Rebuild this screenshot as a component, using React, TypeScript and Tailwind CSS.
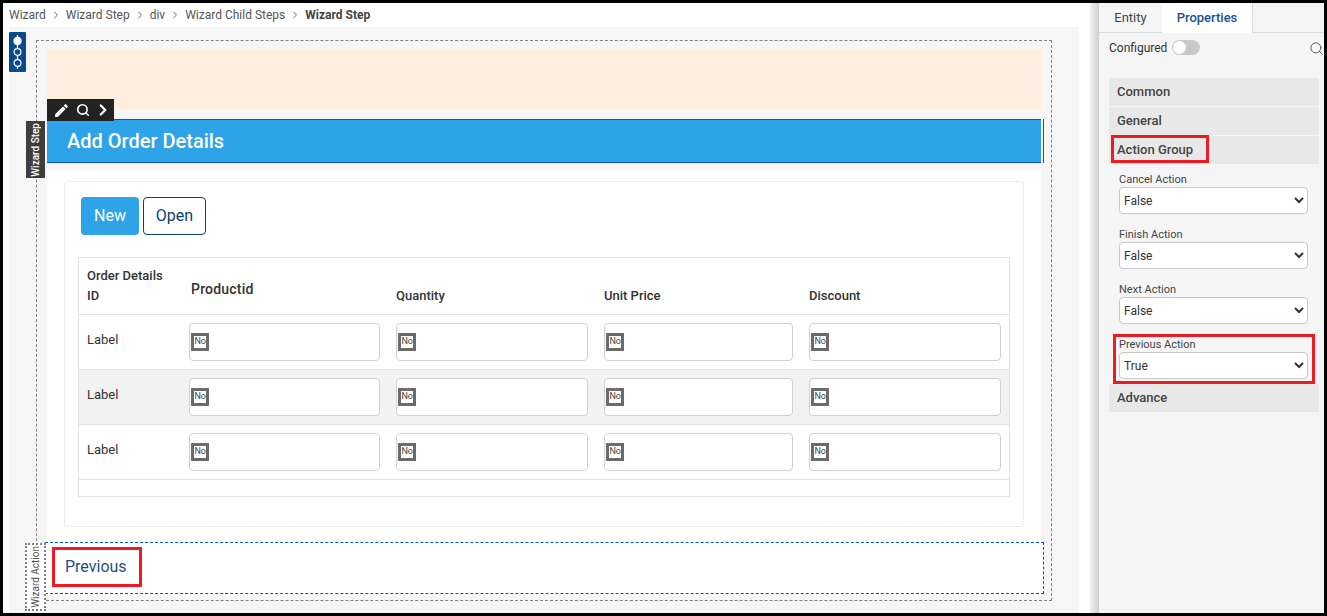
import { ChevronRight, Search } from "lucide-react";
import { MdEdit } from "react-icons/md";

const crumbs = ["Wizard", "Wizard Step", "div", "Wizard Child Steps"];

function NoIcon() {
  return (
    <span className="flex h-[18px] w-[18px] items-center justify-center border-[3px] border-[#6b6b6b] bg-white text-[9px] leading-none tracking-[-0.3px] text-[#444]">
      No
    </span>
  );
}

function CellInput() {
  return (
    <div className="flex h-[38px] items-center rounded-[4px] border border-[#ccd2da] bg-white pl-[1px] pb-[1px]">
      <NoIcon />
    </div>
  );
}

function Row({ shaded }: { shaded?: boolean }) {
  return (
    <div
      className={`grid h-[55px] grid-cols-[102px_207px_208px_205px_208px] border-b border-[#dee2e6] ${
        shaded ? "bg-[#f2f2f2]" : "bg-white"
      }`}
    >
      <div className="pl-2 pt-[16px] text-[13px] leading-[18px] text-[#333]">Label</div>
      <div className="px-2 pt-2"><CellInput /></div>
      <div className="px-2 pt-2"><CellInput /></div>
      <div className="px-2 pt-2"><CellInput /></div>
      <div className="px-2 pt-2"><CellInput /></div>
    </div>
  );
}

function Field({ label, value }: { label: string; value: string }) {
  return (
    <div>
      <div className="h-[15px] text-[11px] leading-[15px] text-[#444]">{label}</div>
      <select
        defaultValue={value}
        className="h-[27px] w-[189px] rounded-[4px] border border-[#c8c8c8] bg-white text-[12px] text-[#333]"
      >
        <option>False</option>
        <option>True</option>
      </select>
    </div>
  );
}

function Section({ title }: { title: string }) {
  return (
    <div className="flex h-[28px] items-center bg-[#e8e8e8] pl-2 text-[13px] font-medium text-[#444]">{title}</div>
  );
}

export default function App() {
  return (
    <div
      className="flex h-[616px] w-[1327px] overflow-hidden border-[3px] border-black bg-white"
      style={{ fontFamily: "Roboto, 'Liberation Sans', sans-serif" }}
    >
      <main className="flex w-[1087px] flex-col pl-[6px]">
        <nav className="flex h-[24px] items-center text-[12px] text-[#555]">
          {crumbs.map((c) => (
            <span key={c} className="flex items-center">
              <span>{c}</span>
              <ChevronRight className="mx-[4px] h-[12px] w-[12px] text-[#666]" strokeWidth={2} />
            </span>
          ))}
          <span className="font-bold text-[#444]">Wizard Step</span>
        </nav>
        <div className="relative h-[586px] w-[1070px] bg-[#f6f6f6] pl-[27px] pt-[13px]">
          <div className="absolute left-0 top-[5px] flex h-[40px] w-[17px] flex-col items-center justify-center rounded-[1px] bg-[#0b4a8a]">
            <svg width="11" height="36" viewBox="0 0 11 36" fill="none" stroke="#fff" strokeWidth="1.2">
              <line x1="5.5" y1="1" x2="5.5" y2="35" />
              <circle cx="5.5" cy="7" r="3.6" fill="#fff" />
              <circle cx="5.5" cy="18" r="3.4" fill="#0b4a8a" />
              <circle cx="5.5" cy="29" r="3.4" fill="#0b4a8a" />
            </svg>
          </div>

          <div className="relative h-[561px] w-[1016px] border border-dashed border-[#808080] pl-[10px] pt-[9px]">
            <div className="h-[59px] w-[994px] bg-[#ffeedd]" />
            <div className="h-[10px]" />
            <div className="h-[44px] w-[997px] border-r border-[#0a52c4]">
              <div className="flex h-[44px] w-[994px] items-center border-y border-[#0a52c4] bg-[#2fa3e8] pl-[20px] text-[20px] font-medium text-white">
                Add Order Details
              </div>
            </div>
            <div className="h-[7px]" />
            <div className="h-[373px] w-[994px] bg-white pl-[17px] pt-[11px]">
              <div className="h-[346px] w-[960px] rounded-[4px] border border-dotted border-[#d8d8d8] pl-[13px] pt-[15px]">
                <div className="ml-[3px] flex gap-[4px]">
                  <button className="h-[38px] w-[58px] rounded-[4px] bg-[#2fa3e8] text-[16px] text-white">New</button>
                  <button className="h-[38px] w-[63px] rounded-[4px] border border-[#0b3f75] bg-white text-[16px] text-[#0b3f75]">
                    Open
                  </button>
                </div>
                <div className="mt-[22px] w-[932px] border border-[#e0e2e6]">
                  <div className="grid h-[57px] grid-cols-[102px_207px_208px_205px_208px] border-b border-[#dee2e6] text-[13px] font-medium text-[#333]">
                    <div className="pl-2 pt-[8px] leading-[20px]">Order Details<br />ID</div>
                    <div className="pl-[10px] pt-[21px] text-[14px] leading-[20px] tracking-[0.2px]">Productid</div>
                    <div className="pl-2 pt-[28px] leading-[20px]">Quantity</div>
                    <div className="pl-2 pt-[28px] leading-[20px]">Unit Price</div>
                    <div className="pl-2 pt-[28px] leading-[20px]">Discount</div>
                  </div>
                  <Row />
                  <Row shaded />
                  <Row />
                  <div className="h-[16px]" />
                </div>
              </div>
            </div>
            <div className="relative -ml-[2px] -mt-[1px] h-[52px] w-[999px] border border-dashed border-[#0a52c4] bg-white pl-[6px] pt-[4px]">
              <button className="h-[40px] w-[90px] border-[3px] border-[#ed1c24] bg-white pl-[10px] text-left text-[16px] text-[#1d4f80]">
                Previous
              </button>
            </div>

            <div className="absolute left-[10px] top-[58px] flex h-[22px] w-[67px] items-center gap-[6px] bg-[#222] pl-[6px] text-white">
              <MdEdit size={17} className="shrink-0" />
              <Search size={14} strokeWidth={2.8} className="shrink-0" />
              <ChevronRight size={18} strokeWidth={3} className="-ml-[2px] shrink-0" />
            </div>
            <div className="absolute -left-[11px] top-[80px] flex h-[57px] w-[19px] items-center justify-center bg-[#3d3d3d] text-white">
              <span className="rotate-180 whitespace-nowrap text-[10px] font-medium [writing-mode:vertical-rl]">Wizard Step</span>
            </div>
            <div className="absolute -left-[12px] top-[502px] flex h-[68px] w-[21px] items-center justify-center border-2 border-dotted border-[#808080] bg-white text-[#555]">
              <span className="rotate-180 whitespace-nowrap text-[10px] [writing-mode:vertical-rl]">Wizard Action</span>
            </div>
          </div>
        </div>
      </main>

      <div className="w-[9px] bg-gradient-to-r from-[#f3f3f3] to-[#cfcfcf]" />

      <aside className="flex-1 bg-[#f5f5f5]">
        <div className="flex h-[30px] border-b border-[#dcdcdc] text-[13px]">
          <div className="flex w-[63px] items-center justify-center text-[#444]">Entity</div>
          <div className="-mb-[1px] flex w-[91px] items-center justify-center border-r border-[#dcdcdc] bg-white font-medium text-[#1d4f91]">
            Properties
          </div>
        </div>
        <div className="flex h-[29px] items-center pl-[10px] text-[12px] text-[#333]">
          <span>Configured</span>
          <span className="ml-[5px] flex h-[15px] w-[28px] items-center rounded-full bg-[#c8c8c8] pl-[1px]">
            <span className="h-[13px] w-[13px] rounded-full bg-white" />
          </span>
          <Search className="ml-auto translate-y-[1px] text-[#555]" size={15} strokeWidth={1.5} />
        </div>
        <div className="ml-[10px] mt-[16px] w-[210px]">
          <Section title="Common" />
          <div className="h-[1px]" />
          <Section title="General" />
          <div className="h-[1px]" />
          <div className="relative">
            <Section title="Action Group" />
            <div className="absolute -top-[1px] left-[2px] h-[28px] w-[98px] border-[3px] border-[#ed1c24]" />
          </div>
          <div className="flex flex-col gap-[13px] pl-[10px] pt-[8px]">
            <Field label="Cancel Action" value="False" />
            <Field label="Finish Action" value="False" />
            <Field label="Next Action" value="False" />
            <div className="relative">
              <Field label="Previous Action" value="True" />
              <div className="absolute -bottom-[5px] -left-[6px] -top-[3px] right-[4px] border-[3px] border-[#ed1c24]" />
            </div>
          </div>
          <div className="mt-[5px]">
            <Section title="Advance" />
          </div>
        </div>
      </aside>
    </div>
  );
}
